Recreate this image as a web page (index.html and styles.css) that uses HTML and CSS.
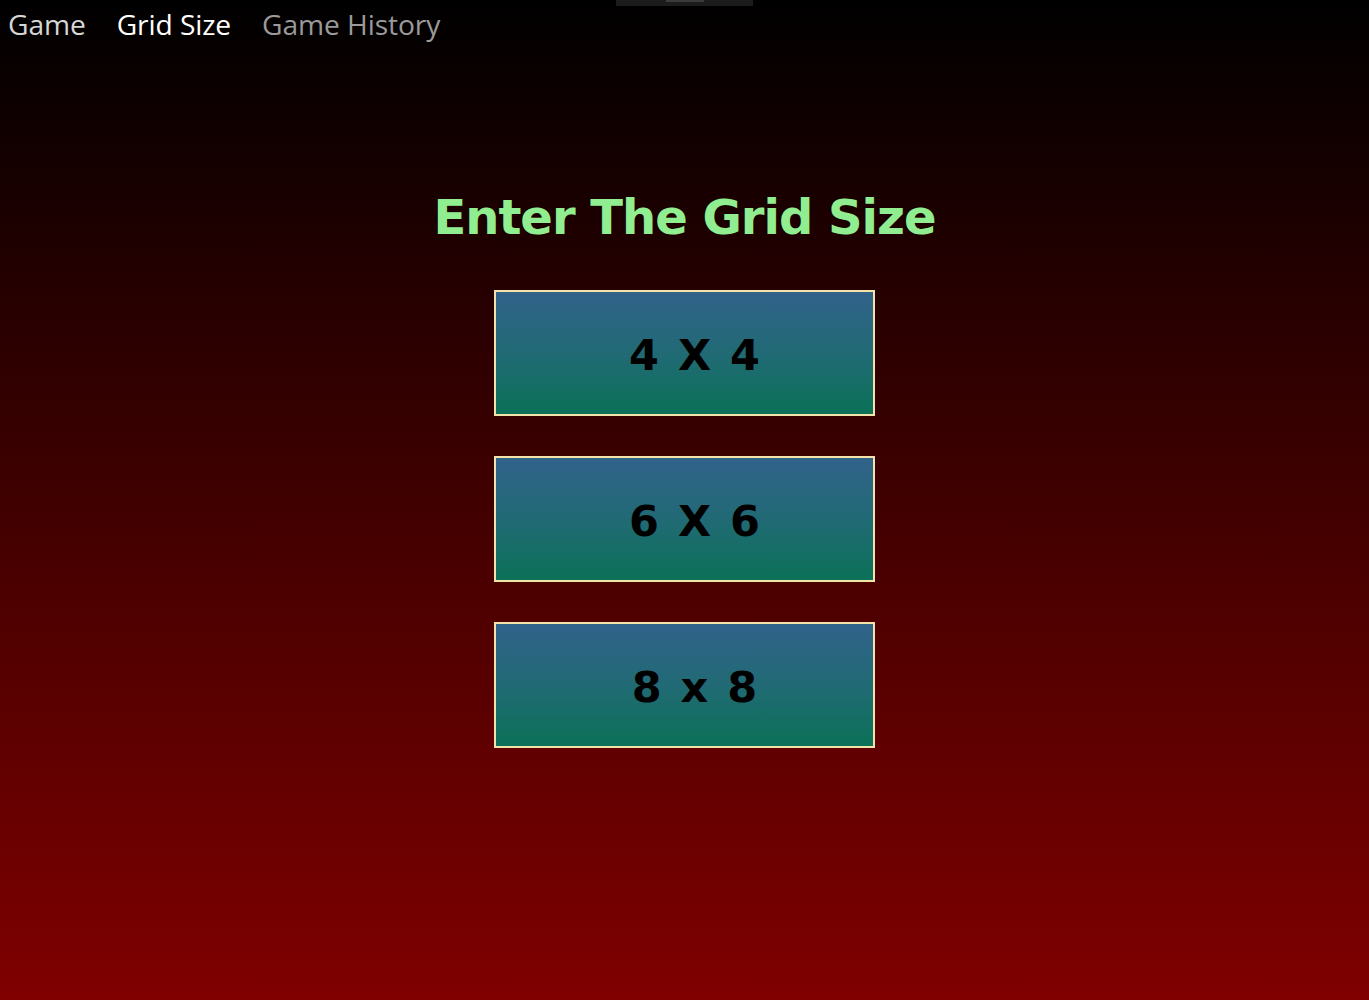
FILE: index.html
```html
<!DOCTYPE html>
<html>
<head>
<meta charset="utf-8">
<link rel="stylesheet" href="styles.css">
</head>
<body>
<div class="handle"><div class="handle-inner"></div></div>
<nav class="menu">
  <span class="item dim">Game</span>
  <span class="item active">Grid Size</span>
  <span class="item muted">Game History</span>
</nav>
<main class="content">
  <h1 class="title">Enter The Grid Size</h1>
  <div class="choices">
    <button class="choice">4 X 4</button>
    <button class="choice">6 X 6</button>
    <button class="choice">8 x 8</button>
  </div>
</main>
</body>
</html>
```
FILE: styles.css
```css
html, body {
  margin: 0;
  padding: 0;
  height: 1000px;
}
body {
  background: linear-gradient(to bottom, #000000 0%, #3a0000 45%, #800000 100%);
  font-family: "Open Sans", "Noto Sans", sans-serif;
  overflow: hidden;
  position: relative;
}
.handle {
  position: absolute;
  left: 616px;
  top: 0;
  width: 137px;
  height: 6px;
  background: #1c1c1c;
}
.handle-inner {
  margin: 0 auto;
  width: 38px;
  height: 2px;
  background: #3a3a3a;
}
.menu {
  display: flex;
  gap: 31px;
  padding: 5px 0 0 8px;
  height: 46px;
  box-sizing: border-box;
}
.item {
  font-size: 28.2px;
  line-height: 38px;
  letter-spacing: -0.1px;
}
.dim { color: #d6d6d6; }
.active { color: #ffffff; }
.muted { color: #9a9a9a; }
.content {
  display: flex;
  flex-direction: column;
  align-items: center;
}
.title {
  margin: 140px 0 0 0;
  font-family: "Comic Sans MS", "DejaVu Sans", sans-serif;
  font-weight: bold;
  font-size: 48px;
  line-height: 62px;
  color: #90ee90;
  letter-spacing: -1px;
}
.choices {
  margin-top: 42px;
  display: flex;
  flex-direction: column;
  gap: 40px;
}
.choice {
  width: 381px;
  height: 126px;
  border: 2px solid #f3e3a8;
  background: linear-gradient(to bottom, #31628a 0%, #216a75 50%, #0b7157 100%);
  font-family: "Comic Sans MS", "DejaVu Sans", sans-serif;
  font-weight: bold;
  font-size: 43px;
  color: #000000;
  padding: 4px 0 0 20px;
  word-spacing: 4px;
}
```
